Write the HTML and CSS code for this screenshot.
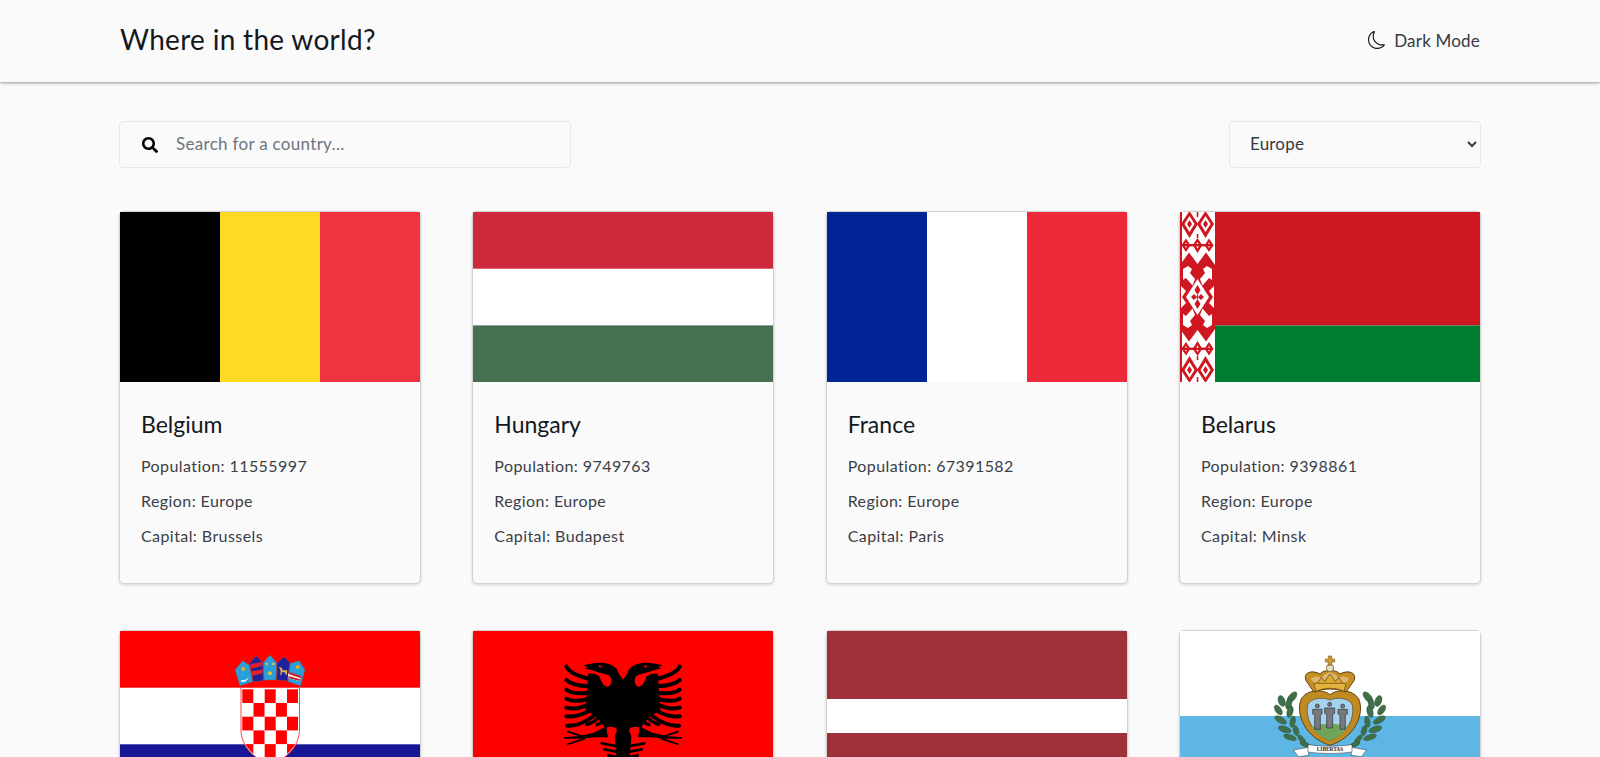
FILE: index.html
```html
<!DOCTYPE html>
<html lang="en">
<head>
<meta charset="utf-8">
<title>Where in the world?</title>
<link rel="stylesheet" href="styles.css">
</head>
<body>
<header class="topbar">
  <h1 class="brand">Where in the world?</h1>
  <button class="mode" type="button">
    <svg class="moon" viewBox="0 0 16 16"><path d="M6 .278a.768.768 0 0 1 .08.858 7.208 7.208 0 0 0-.878 3.46c0 4.021 3.278 7.277 7.318 7.277.527 0 1.04-.055 1.533-.16a.787.787 0 0 1 .81.316.733.733 0 0 1-.031.893A8.349 8.349 0 0 1 8.344 16C3.734 16 0 12.286 0 7.71 0 4.266 2.114 1.312 5.124.06A.752.752 0 0 1 6 .278zM4.858 1.311A7.269 7.269 0 0 0 1.025 7.71c0 4.02 3.279 7.276 7.319 7.276a7.316 7.316 0 0 0 5.205-2.162c-.337.042-.68.063-1.029.063-4.61 0-8.343-3.714-8.343-8.29 0-1.167.242-2.278.681-3.286z"/></svg>
    <span>Dark Mode</span>
  </button>
</header>
<main class="page">
  <div class="controls">
    <label class="search">
      <svg class="search-icon" viewBox="0 0 512 512"><path d="M505 442.700L405.300 343c-4.500-4.500-10.600-7-17-7H372c27.600-35.300 44-79.700 44-128C416 93.100 322.900 0 208 0S0 93.100 0 208s93.100 208 208 208c48.300 0 92.700-16.400 128-44v16.300c0 6.400 2.500 12.500 7 17l99.700 99.700c9.400 9.400 24.600 9.400 33.900 0l28.300-28.300c9.400-9.400 9.400-24.600.1-34zM208 336c-70.700 0-128-57.200-128-128 0-70.700 57.200-128 128-128 70.700 0 128 57.200 128 128 0 70.700-57.200 128-128 128z"/></svg>
      <input class="search-input" type="text" placeholder="Search for a country...">
    </label>
    <select class="region">
      <option>Africa</option>
      <option>America</option>
      <option>Asia</option>
      <option selected>Europe</option>
      <option>Oceania</option>
    </select>
  </div>
  <section class="grid">
    <article class="card">
      <svg class="flag" viewBox="0 0 300 170" preserveAspectRatio="none"><rect width="100" height="170" fill="#000"/><rect x="100" width="100" height="170" fill="#fdda24"/><rect x="200" width="100" height="170" fill="#ef3340"/></svg>
      <div class="info"><h2 class="name">Belgium</h2><p class="fact">Population: 11555997</p><p class="fact">Region: Europe</p><p class="fact">Capital: Brussels</p></div>
    </article>
    <article class="card">
      <svg class="flag" viewBox="0 0 300 170" preserveAspectRatio="none"><rect width="300" height="57" fill="#cd2a3e"/><rect y="56.700" width="300" height="57" fill="#fff"/><rect y="113.400" width="300" height="57" fill="#477050"/></svg>
      <div class="info"><h2 class="name">Hungary</h2><p class="fact">Population: 9749763</p><p class="fact">Region: Europe</p><p class="fact">Capital: Budapest</p></div>
    </article>
    <article class="card">
      <svg class="flag" viewBox="0 0 300 170" preserveAspectRatio="none"><rect width="100" height="170" fill="#002395"/><rect x="100" width="100" height="170" fill="#fff"/><rect x="200" width="100" height="170" fill="#ed2939"/></svg>
      <div class="info"><h2 class="name">France</h2><p class="fact">Population: 67391582</p><p class="fact">Region: Europe</p><p class="fact">Capital: Paris</p></div>
    </article>
    <article class="card">
      <svg class="flag" viewBox="0 0 300 170" preserveAspectRatio="none">
        <rect width="300" height="113.400" fill="#ce1720"/><rect y="113.400" width="300" height="57" fill="#007c30"/>
        <rect width="35" height="170" fill="#fff"/>
        <defs>
          <g id="by-half" fill="#ce1720">
            <rect width="2" height="85"/>
            <path fill-rule="evenodd" d="M9.500 -1l8.500 13-8.500 14-8.500-14zM9.500 4L4.500 12l5 8 5-8zM9.500 8l2.500 4-2.500 4-2.500-4z"/>
            <path fill-rule="evenodd" d="M25.500 -1l8.500 13-8.500 14-8.500-14zM25.500 4L20.500 12l5 8 5-8zM25.500 8l2.500 4-2.500 4-2.500-4z"/>
            <rect x="16.700" y="0" width="1.600" height="5"/><rect x="16.700" y="22" width="1.600" height="4"/>
            <rect x="2" y="32" width="31" height="2.400"/>
            <path fill-rule="evenodd" d="M6 26.500l4.500 6.700L6 40l-4.500-6.800zM6 30.500l-1.800 2.700L6 36l1.800-2.800z"/>
            <path fill-rule="evenodd" d="M17.500 26l4.800 7.200-4.800 7.800-4.800-7.800zM17.500 30l-2 3.200 2 3.200 2-3.200z"/>
            <path fill-rule="evenodd" d="M29 26.500l4.500 6.700L29 40l-4.500-6.800zM29 30.500l-1.800 2.700L29 36l1.800-2.800z"/>
            <path d="M9 40.500l8.500 11.500 8.500-11.500 9 12.500v32H0V53z"/>
            <path d="M17.500 67l11.500 18H6z" fill="#fff"/>
            <path d="M3 57l5-3 4 3-2 4 5 6-2.500 6.500L6 66l-3 2zM32 57l-5-3-4 3 2 4-5 6 2.500 6.500L29 66l3 2z" fill="#fff"/>
            <path d="M1 74l5 5-4 6H1zM34 74l-5 5 4 6h1z" fill="#fff"/>
            <path d="M17.500 73l3 5-3 5-3-5zM11 85l3-3 3 3zM24 85l-3-3-3 3z"/>
            <rect x="16.800" y="83" width="1.400" height="2"/>
          </g>
        </defs>
        <use href="#by-half"/>
        <use href="#by-half" transform="matrix(1 0 0 -1 0 170)"/>
      </svg>
      <div class="info"><h2 class="name">Belarus</h2><p class="fact">Population: 9398861</p><p class="fact">Region: Europe</p><p class="fact">Capital: Minsk</p></div>
    </article>

    <article class="card">
      <svg class="flag" viewBox="0 0 300 170" preserveAspectRatio="none">
        <rect width="300" height="57" fill="#f00"/><rect y="56.700" width="300" height="57" fill="#fff"/><rect y="113.300" width="300" height="57" fill="#171796"/>
        <defs><clipPath id="hr-shield"><path d="M121.500 57H179V98C179 116 165 127 150.300 133 135.500 127 121.500 116 121.500 98Z"/></clipPath></defs>
        <path d="M121 56.500H179.500V98C179.500 117 165 128 150.300 134 135.500 128 121 117 121 98Z" fill="#fff" stroke="#f44" stroke-width="1"/>
        <g clip-path="url(#hr-shield)" fill="#f00">
          <rect x="122.300" y="58.300" width="11" height="13.700"/><rect x="144.700" y="58.300" width="11" height="13.700"/><rect x="167" y="58.300" width="11" height="13.700"/>
          <rect x="133.500" y="72" width="11" height="13.700"/><rect x="155.900" y="72" width="11" height="13.700"/>
          <rect x="122.300" y="85.700" width="11" height="13.700"/><rect x="144.700" y="85.700" width="11" height="13.700"/><rect x="167" y="85.700" width="11" height="13.700"/>
          <rect x="133.500" y="99.400" width="11" height="13.700"/><rect x="155.900" y="99.400" width="11" height="13.700"/>
          <rect x="122.300" y="113.100" width="11" height="13.700"/><rect x="144.700" y="113.100" width="11" height="13.700"/><rect x="167" y="113.100" width="11" height="20"/>
        </g>
        <g transform="translate(-10 -11) scale(.3333)" stroke="#666" stroke-width="1.200">
          <path d="M375 150L398 122 418 135 428 185 390 197Z" fill="#2a9ed8"/>
          <path d="M420 128L438 108 458 128 460 182 430 185Z" fill="#20209a"/>
          <path d="M460 128L480 105 500 128 498 180 462 180Z" fill="#2a9ed8"/>
          <path d="M502 128L522 110 540 128 532 182 500 180Z" fill="#20209a"/>
          <path d="M541 130L568 122 585 150 572 197 534 185Z" fill="#2a9ed8"/>
          <g stroke="none">
            <path d="M422 132L456 126V138L424 146ZM424 154L458 148V160L426 168Z" fill="#e0202a"/>
            <path d="M535 160L572 172 570 184 534 174Z" fill="#fff"/><path d="M536 168L571 178 570 183 535 174Z" fill="#d02030"/>
            <path d="M538 156L574 168 573 175 537 163Z" fill="#d02030"/>
            <circle cx="400" cy="147" r="6" fill="#d9b030"/><circle cx="470" cy="132" r="4" fill="#e8c030"/><circle cx="490" cy="132" r="4" fill="#e8c030"/><circle cx="480" cy="160" r="6" fill="#e8c030"/>
            <circle cx="563" cy="141" r="6" fill="#d9b030"/>
            <path d="M507 140l8 3 3 8h14l-2 14h-3l-2-8h-9l-2 9h-3l1-14z" fill="#e0b840"/>
            <path d="M394 180c10 3 18-2 22-10-2 12-16 20-24 14z" fill="#fff"/>
          </g>
        </g>
      </svg>
    </article>
    <article class="card">
      <svg class="flag" viewBox="0 0 300 170" preserveAspectRatio="none">
        <rect width="300" height="170" fill="#f00"/>
        <defs>
          <g id="al-half">
            <path d="M312 152C304 140 296 132 292 118 280 102 250 94 222 100L190 106 206 112 194 114 222 124 244 134 206 130 198 240 232 262 255 292 222 308 180 318 132 322 134 326 180 326 228 322 262 322 284 308 290 381H312Z" fill="#000"/>
            <path d="M206 118L246 130C256 132 268 134 274 144 278 156 272 170 262 170 252 168 244 154 240 140Z" fill="#f00"/>
            <path d="M262 292C276 288 290 292 292 300 288 316 278 332 270 330 266 322 258 304 262 292Z" fill="#f00"/>
            <path d="M236 106l14 2-10 5z" fill="#f00"/>
            <g fill="none" stroke="#000" stroke-linecap="round" stroke-width="12">
              <path d="M140 110C150 130 180 138 205 146"/>
              <path d="M140 150C155 164 180 168 205 168"/>
              <path d="M140 179C155 190 180 192 205 188"/>
              <path d="M140 206C155 214 180 214 205 207"/>
              <path d="M140 233C160 238 185 234 205 224"/>
              <path d="M140 259C160 262 190 254 210 242"/>
              <path d="M142 287C165 289 195 278 222 258"/>
            </g>
            <g fill="none" stroke="#000" stroke-linecap="round" stroke-width="10">
              <path d="M202 283C215 280 232 270 242 256"/>
              <path d="M232 284C245 280 255 272 264 260"/>
            </g>
            <g fill="none" stroke="#000" stroke-linecap="round" stroke-width="5">
              <path d="M145 305L190 320"/><path d="M145 343L195 326"/>
            </g>
            <g fill="none" stroke="#000" stroke-linecap="round" stroke-width="8">
              <path d="M246 340L290 348"/><path d="M254 358L295 366"/><path d="M266 376L300 382"/>
            </g>
          </g>
        </defs>
        <g transform="translate(46.700 -1) scale(.3333)">
          <use href="#al-half"/>
          <use href="#al-half" transform="matrix(-1 0 0 1 620 0)"/>
        </g>
      </svg>
    </article>
    <article class="card">
      <svg class="flag" viewBox="0 0 300 170" preserveAspectRatio="none"><rect width="300" height="68" fill="#9e3039"/><rect y="68" width="300" height="34" fill="#fff"/><rect y="102" width="300" height="68" fill="#9e3039"/></svg>
    </article>
    <article class="card">
      <svg class="flag" viewBox="0 0 300 170" preserveAspectRatio="none">
        <rect width="300" height="85" fill="#fff"/><rect y="85" width="300" height="85" fill="#5eb6e4"/>
        <defs>
          <g id="sm-wreath" fill="#3f7049" stroke="#24402c" stroke-width="1">
            <ellipse cx="156" cy="172" rx="10" ry="20" transform="rotate(40 156 172)"/>
            <ellipse cx="125" cy="183" rx="10" ry="17" transform="rotate(-20 125 183)"/>
            <ellipse cx="146" cy="192" rx="9" ry="16" transform="rotate(15 146 192)"/>
            <ellipse cx="115" cy="210" rx="9" ry="17" transform="rotate(-35 115 210)"/>
            <ellipse cx="150" cy="215" rx="9" ry="18" transform="rotate(15 150 215)"/>
            <ellipse cx="122" cy="240" rx="9" ry="20" transform="rotate(-60 122 240)"/>
            <ellipse cx="158" cy="245" rx="8" ry="17" transform="rotate(10 158 245)"/>
            <ellipse cx="134" cy="268" rx="9" ry="20" transform="rotate(-72 134 268)"/>
            <ellipse cx="168" cy="272" rx="8" ry="16" transform="rotate(-15 168 272)"/>
            <ellipse cx="150" cy="292" rx="8" ry="20" transform="rotate(-72 150 292)"/>
            <ellipse cx="185" cy="298" rx="7" ry="15" transform="rotate(-40 185 298)"/>
            <ellipse cx="195" cy="313" rx="7" ry="16" transform="rotate(-65 195 313)"/>
          </g>
        </defs>
        <g transform="translate(60 9) scale(.3333)">
          <use href="#sm-wreath"/>
          <use href="#sm-wreath" transform="matrix(-1 0 0 1 540 0)"/>
          <path d="M270 164C250 148 205 146 184 176 165 222 195 292 270 316 345 292 375 222 356 176 335 146 290 148 270 164Z" fill="#c08a22" stroke="#5c4210" stroke-width="3"/>
          <path d="M270 180C250 172 218 172 204 192 194 230 215 280 270 302 325 280 346 230 336 192 322 172 290 172 270 180Z" fill="#a5d2ee" stroke="#5c4210" stroke-width="2"/>
          <path d="M216 262C245 248 295 248 324 262 310 282 292 294 270 302 248 294 230 282 216 262Z" fill="#6fa55a"/>
          <g fill="#77797c" stroke="#2f3033" stroke-width="2">
            <path d="M218 208H246V222L241 226V268H224V226L218 222Z"/>
            <path d="M254 204H284V220L278 224V264H260V224L254 220Z"/>
            <path d="M294 208H322V222L316 226V268H300V226L294 222Z"/>
            <circle cx="232" cy="198" r="6"/><circle cx="269" cy="193" r="6"/><circle cx="308" cy="198" r="6"/>
          </g>
          <path d="M198 122C188 98 215 88 240 102 250 88 290 88 300 102 325 88 352 98 342 122L318 156C290 144 250 144 222 156Z" fill="#c68f24" stroke="#5c4210" stroke-width="3"/>
          <path d="M212 118C222 106 236 108 244 114L252 104 270 96 288 104 296 114C304 108 318 106 328 118L316 128H224Z" fill="#fff" fill-opacity=".35"/>
          <path d="M222 132C250 120 290 120 318 132L312 154C288 142 252 142 228 154Z" fill="#e3b33e" stroke="#5c4210" stroke-width="2"/>
          <path d="M232 130l12-18 10 12 16-22 16 22 10-12 12 18Z" fill="#dca92f" stroke="#5c4210" stroke-width="2"/>
          <circle cx="270" cy="84" r="11" fill="#e8e0c8" stroke="#5c4210" stroke-width="2"/>
          <path d="M265 48h10v9h9v9h-9v10h-10V66h-9v-9h9z" fill="#d19a2e" stroke="#5c4210" stroke-width="1.500"/>
          <path d="M160 330L206 322 206 346 176 350ZM380 330L334 322 334 346 364 350Z" fill="#fff" stroke="#333" stroke-width="1.500"/>
          <path d="M204 314C245 320 295 320 336 314V336C295 342 245 342 204 336Z" fill="#fff" stroke="#333" stroke-width="1.500"/>
          <text class="motto" x="270" y="333" text-anchor="middle">LIBERTAS</text>
        </g>
      </svg>
    </article>
  </section>
</main>
</body>
</html>
```
FILE: styles.css
```css
* { box-sizing: border-box; }

html, body {
  margin: 0;
  background: #fafafa;
}

body {
  font-family: "Lato", "Noto Sans", sans-serif;
  color: #212529;
}

.topbar {
  display: flex;
  align-items: center;
  justify-content: space-between;
  height: 82px;
  padding: 0 120px 2px;
  background: #fafafa;
  box-shadow: 0 1px 3px rgba(0, 0, 0, 0.4);
}

.brand {
  margin: 0;
  font-size: 28px;
  font-weight: 400;
  line-height: 1.2;
  letter-spacing: 0.3px;
  color: #14181c;
}

.mode {
  display: flex;
  align-items: center;
  gap: 8px;
  padding: 0;
  border: 0;
  background: none;
  font: inherit;
  font-size: 17px;
  letter-spacing: 0.2px;
  color: #343a40;
}

.moon {
  width: 18px;
  height: 18px;
  fill: #14181c;
}

.page {
  padding: 39px 119px 48px;
}

.controls {
  display: flex;
  justify-content: space-between;
  height: 47px;
}

.search {
  display: flex;
  align-items: center;
  gap: 18px;
  width: 452px;
  padding: 0 22px;
  border: 1px solid #e8e8e8;
  border-radius: 4px;
  background: #fafafa;
}

.search-icon {
  flex: none;
  width: 16px;
  height: 16px;
  fill: #000;
}

.search-input {
  flex: 1;
  min-width: 0;
  padding: 0 0 2px;
  border: 0;
  outline: 0;
  background: transparent;
  font: inherit;
  font-size: 17px;
  letter-spacing: 0.3px;
  color: #212529;
}

.search-input::placeholder {
  color: #6c757d;
  opacity: 1;
}

.region {
  width: 252px;
  padding: 0 4px 2px 16px;
  border: 1px solid #e8e8e8;
  border-radius: 4px;
  background: #fafafa;
  font: inherit;
  font-size: 17px;
  letter-spacing: 0.2px;
  color: #343a40;
}

.grid {
  display: grid;
  grid-template-columns: repeat(4, 302px);
  justify-content: space-between;
  row-gap: 46px;
  margin-top: 43px;
}

.card {
  height: 373px;
  border: 1px solid #d2d2d2;
  border-radius: 5px;
  background: #fafafa;
  box-shadow: 0 1px 3px rgba(0, 0, 0, 0.15);
}

.flag {
  display: block;
  width: 300px;
  height: 170px;
}

.info {
  padding: 29px 21px 0;
}

.name {
  margin: 0 0 18.500px;
  font-size: 23px;
  font-weight: 400;
  line-height: 26px;
  color: #14181c;
}

.fact {
  margin: 0 0 16px;
  font-size: 16px;
  line-height: 19px;
  letter-spacing: 0.42px;
  color: #3b4046;
}

.motto {
  font-family: "Liberation Serif", serif;
  font-size: 16px;
  font-weight: 700;
  fill: #222;
}
```
